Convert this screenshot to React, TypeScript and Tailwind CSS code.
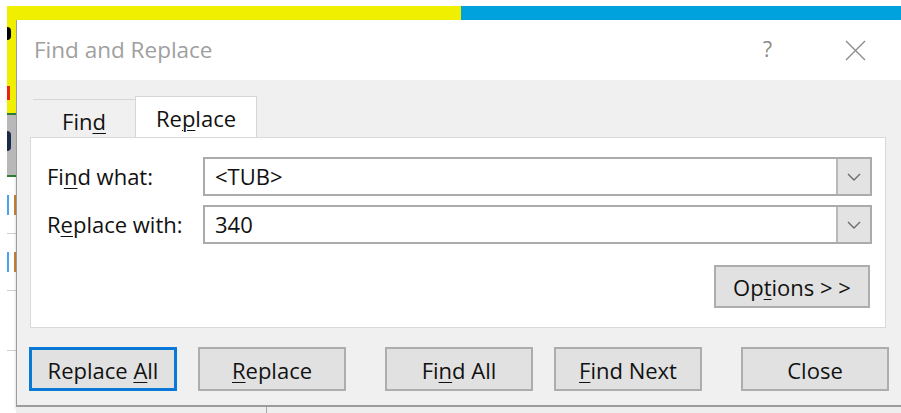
import React from "react";

const font = { fontFamily: '"Open Sans", "Noto Sans", sans-serif' };

function U({ children }: { children: React.ReactNode }) {
  return <span className="underline decoration-1 underline-offset-[3px]">{children}</span>;
}

function Chevron() {
  return (
    <svg width="14" height="8" viewBox="0 0 14 8" fill="none">
      <path d="M1 1 L7 7 L13 1" stroke="#6b6b6b" strokeWidth="1.4" />
    </svg>
  );
}

function Combo({ value }: { value: string }) {
  return (
    <div className="flex h-[39px] border-2 border-[#ababab] bg-white">
      <div className="flex flex-1 items-center pl-[10px] text-[22px] text-[#111]">{value}</div>
      <div className="flex w-[34px] items-center justify-center border-l-2 border-[#b9b9b9] bg-[#e3e3e3]">
        <Chevron />
      </div>
    </div>
  );
}

function Btn({
  children,
  className = "",
  focused = false,
}: {
  children: React.ReactNode;
  className?: string;
  focused?: boolean;
}) {
  return (
    <div
      className={`flex h-[44px] w-[148px] items-center justify-center bg-[#e1e1e1] pt-[2px] text-[22px] text-[#111] ${
        focused ? "border-[3px] border-[#0a78d7]" : "border-2 border-[#adadad]"
      } ${className}`}
    >
      <span>{children}</span>
    </div>
  );
}

export default function App() {
  return (
    <div className="flex h-[413px] w-[901px] overflow-hidden bg-white" style={font}>
      <div className="w-[7px] shrink-0 bg-white" />
      <div className="flex flex-1 flex-col">
        <div className="h-[6px] bg-white" />
        {/* ribbon of coloured header cells */}
        <div className="flex h-[14px]">
          <div className="w-[454px] bg-[#f0ef00]" />
          <div className="flex-1 bg-[#00a2de]" />
        </div>
        <div className="flex flex-1">
          {/* sliver of the sheet left of the dialog */}
          <div className="flex w-[9px] shrink-0 flex-col">
            <div className="relative h-[93px] overflow-hidden bg-[#f0ef00]">
              <div className="absolute left-0 top-[7px] h-[13px] w-[4px] rounded-r-full bg-black" />
              <div className="absolute left-0 top-[66px] h-[14px] w-[3px] bg-[#e8240c]" />
            </div>
            <div className="h-[2px] bg-[#2e7d32]" />
            <div className="relative h-[60px] bg-[#b8b8b8]">
              <div className="absolute left-0 top-[16px] h-[20px] w-[4px] rounded-r-full bg-[#1c2a4a]" />
            </div>
            <div className="h-[2px] bg-[#2e7d32]" />
            <div className="flex flex-1 flex-col bg-white">
              <div className="flex h-[57px] items-center gap-[3px] border-b border-[#cfcfcf]">
                <div className="h-[20px] w-[2px] bg-[#4aa3f0]" />
                <div className="ml-auto h-[20px] w-[2px] bg-[#c8843b]" />
              </div>
              <div className="flex h-[57px] items-center gap-[3px] border-b border-[#cfcfcf]">
                <div className="h-[20px] w-[2px] bg-[#4aa3f0]" />
                <div className="ml-auto h-[20px] w-[2px] bg-[#c8843b]" />
              </div>
              <div className="h-[60px] border-b border-[#cfcfcf]" />
            </div>
          </div>

          {/* dialog */}
          <div className="flex flex-1 flex-col">
            <div className="flex h-[387px] flex-col border-b-2 border-l border-[#9c9c9c] bg-[#f0f0f0] shadow-[0_2px_3px_rgba(0,0,0,0.2)]">
              <div className="flex h-[60px] items-center bg-white">
                <div className="ml-[17px] text-[22.5px] text-[#a0a0a0]">Find and Replace</div>
                <div className="ml-auto mr-[73px] text-[21px] text-[#8a8a8a]">?</div>
                <svg className="mr-[35px]" width="21" height="21" viewBox="0 0 21 21">
                  <path d="M1 1 L20 20 M20 1 L1 20" stroke="#8a8a8a" strokeWidth="1.3" />
                </svg>
              </div>

              {/* tabs */}
              <div className="ml-[16px] mt-[16px] flex h-[41px] items-end">
                <div className="flex h-[38px] w-[102px] items-center justify-center border-t border-[#d6d6d6] pt-[6px] text-[22px] text-[#111]">
                  <span>
                    Fin<U>d</U>
                  </span>
                </div>
                <div className="-mb-px flex h-[42px] w-[122px] items-center justify-center border border-b-0 border-[#d6d6d6] bg-white pt-[2px] text-[22px] text-[#111]">
                  <span>
                    Re<U>p</U>lace
                  </span>
                </div>
              </div>

              {/* tab page */}
              <div className="ml-[13px] mr-[15px] h-[191px] border border-[#d9d9d9] bg-white">
                <div className="flex flex-col pl-[16px] pr-[13px] pt-[19px]">
                  <div className="flex items-center">
                    <div className="w-[156px] text-[22px] text-[#111]">
                      Fi<U>n</U>d what:
                    </div>
                    <div className="flex-1">
                      <Combo value="<TUB>" />
                    </div>
                  </div>
                  <div className="mt-[9px] flex items-center">
                    <div className="w-[156px] text-[22px] text-[#111]">
                      R<U>e</U>place with:
                    </div>
                    <div className="flex-1">
                      <Combo value="340" />
                    </div>
                  </div>
                  <div className="mt-[21px] flex justify-end pr-[2px]">
                    <div className="flex h-[43px] w-[156px] items-center justify-center border-2 border-[#adadad] bg-[#e1e1e1] pt-[2px] text-[22px] text-[#111]">
                      <span>
                        Op<U>t</U>ions &gt; &gt;
                      </span>
                    </div>
                  </div>
                </div>
              </div>

              {/* command buttons */}
              <div className="ml-[12px] mt-[19px] flex">
                <Btn focused>
                  Replace <U>A</U>ll
                </Btn>
                <Btn className="ml-[21px]">
                  <U>R</U>eplace
                </Btn>
                <Btn className="ml-[39px]">
                  Fi<U>n</U>d All
                </Btn>
                <Btn className="ml-[21px]">
                  <U>F</U>ind Next
                </Btn>
                <Btn className="ml-[39px]">Close</Btn>
              </div>
            </div>
            <div className="flex flex-1 bg-[#eeeeee]">
              <div className="w-[251px] border-r border-[#a8a8a8]" />
            </div>
          </div>
        </div>
      </div>
    </div>
  );
}
